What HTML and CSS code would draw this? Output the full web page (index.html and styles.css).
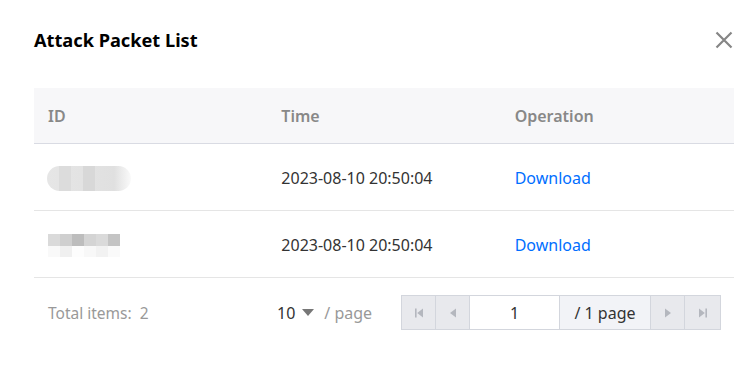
FILE: index.html
```html
<!DOCTYPE html>
<html lang="en">
<head>
    <meta charset="UTF-8">
    <meta name="viewport" content="width=device-width, initial-scale=1.0">
    <title>Attack Packet List</title>
    <link rel="stylesheet" href="styles.css">
</head>
<body>
    <div class="dialog">
        <div class="dialog-head">
            <h2 class="dialog-title">Attack Packet List</h2>
            <button class="close-btn" aria-label="Close">
                <svg width="18" height="18" viewBox="0 0 18 18">
                    <path d="M1.5 1.5 L16.5 16.5 M16.5 1.5 L1.5 16.5" stroke="#868686" stroke-width="2.2" fill="none"/>
                </svg>
            </button>
        </div>

        <table class="list">
            <thead>
                <tr>
                    <th>ID</th>
                    <th>Time</th>
                    <th>Operation</th>
                </tr>
            </thead>
            <tbody>
                <tr>
                    <td><span class="mask mask-pill"><i></i><i></i><i></i><i></i><i></i><i></i></span></td>
                    <td>2023-08-10 20:50:04</td>
                    <td><a class="link" href="#">Download</a></td>
                </tr>
                <tr>
                    <td><span class="mask mask-grid"><i></i><i></i><i></i><i></i><i></i><i></i><i></i><i></i><i></i><i></i><i></i><i></i></span></td>
                    <td>2023-08-10 20:50:04</td>
                    <td><a class="link" href="#">Download</a></td>
                </tr>
            </tbody>
        </table>

        <div class="pager">
            <div class="pager-total">Total items:&nbsp; 2</div>
            <div class="pager-size">
                <span class="size-val">10</span>
                <span class="caret"></span>
                <span class="size-unit">/ page</span>
            </div>
            <div class="pager-nav">
                <button class="nav-btn" aria-label="First">
                    <svg width="10" height="10" viewBox="0 0 10 10"><rect x="1" y="0.5" width="1.6" height="9" fill="#b4b7be"/><path d="M9 0.5 L3.2 5 L9 9.5 Z" fill="#b4b7be"/></svg>
                </button>
                <button class="nav-btn" aria-label="Previous">
                    <svg width="10" height="10" viewBox="0 0 10 10"><path d="M8 0.5 L2 5 L8 9.5 Z" fill="#b4b7be"/></svg>
                </button>
                <input class="page-input" type="text" value="1">
                <span class="page-count">/ 1 page</span>
                <button class="nav-btn" aria-label="Next">
                    <svg width="10" height="10" viewBox="0 0 10 10"><path d="M2 0.5 L8 5 L2 9.5 Z" fill="#b4b7be"/></svg>
                </button>
                <button class="nav-btn" aria-label="Last">
                    <svg width="10" height="10" viewBox="0 0 10 10"><path d="M1 0.5 L6.8 5 L1 9.5 Z" fill="#b4b7be"/><rect x="7.4" y="0.5" width="1.6" height="9" fill="#b4b7be"/></svg>
                </button>
            </div>
        </div>
    </div>
</body>
</html>
```

FILE: styles.css
```css
body {
    margin: 0;
    background: #fff;
    font-family: "Noto Sans", "Open Sans", Arial, sans-serif;
    font-size: 16px;
    color: #333;
}
.dialog {
    width: 754px;
    height: 382px;
    padding: 0 20px 0 34px;
    box-sizing: border-box;
    background: #fff;
}
.dialog-head {
    display: flex;
    align-items: center;
    justify-content: space-between;
    height: 88px;
    padding-bottom: 8px;
    box-sizing: border-box;
}
.dialog-title {
    margin: 0;
    font-size: 18.2px;
    font-weight: 700;
    color: #000;
}
.close-btn {
    border: none;
    background: none;
    padding: 0;
    margin-right: 1px;
    width: 18px;
    height: 18px;
    cursor: pointer;
    line-height: 0;
}
.list {
    width: 700px;
    border-collapse: collapse;
    table-layout: fixed;
}
.list th {
    height: 54px;
    padding: 1px 14px 0;
    background: #f7f7f9;
    border-bottom: 1px solid #d9dbe3;
    text-align: left;
    font-weight: 600;
    color: #888;
    font-size: 16px;
}
.list td {
    height: 64px;
    padding: 2px 14px 0;
    border-bottom: 1px solid #e5e5e5;
    vertical-align: middle;
    color: #333;
    font-size: 16px;
}
.link {
    color: #006eff;
    text-decoration: none;
}
.mask {
    display: grid;
    width: 84px;
}
.mask i {
    display: block;
}
.mask-pill {
    grid-template-columns: repeat(6, 12px) 12px;
    height: 25px;
    border-radius: 13px;
    overflow: hidden;
    background: linear-gradient(90deg, #e6e6e6 0, #e0e0e0 80%, #fafafa 100%);
    margin-left: -1px;
}
.mask-pill i:nth-child(2) { background: #dcdcdc; }
.mask-pill i:nth-child(4) { background: #d8d8d8; }
.mask-grid {
    grid-template-columns: repeat(6, 12px);
    grid-template-rows: 12px 11px;
    width: 72px;
}
.mask-grid i:nth-child(1) { background: #dadada; }
.mask-grid i:nth-child(2) { background: #cfcfcf; }
.mask-grid i:nth-child(3) { background: #bdbdbd; }
.mask-grid i:nth-child(4) { background: #d4d4d4; }
.mask-grid i:nth-child(5) { background: #dadada; }
.mask-grid i:nth-child(6) { background: #c4c4c4; }
.mask-grid i:nth-child(7) { background: #f9f9f9; }
.mask-grid i:nth-child(8) { background: #f0f0f0; }
.mask-grid i:nth-child(9) { background: #fdfdfd; }
.mask-grid i:nth-child(10) { background: #f8f8f8; }
.mask-grid i:nth-child(11) { background: #f2f2f2; }
.mask-grid i:nth-child(12) { background: #fafafa; }
.pager {
    display: flex;
    align-items: center;
    height: 68px;
    padding-left: 14px;
    padding-top: 1px;
    box-sizing: border-box;
}
.pager-total {
    width: 229px;
    color: #999;
    font-size: 15.5px;
}
.pager-size {
    display: flex;
    align-items: center;
    width: 124px;
}
.size-val {
    color: #333;
}
.caret {
    width: 0;
    height: 0;
    margin: 0 10px 0 7px;
    border-left: 6px solid transparent;
    border-right: 6px solid transparent;
    border-top: 7px solid #777;
}
.size-unit {
    color: #999;
}
.pager-nav {
    display: flex;
    height: 35px;
    border: 1px solid #d3d6dd;
    box-sizing: border-box;
}
.nav-btn {
    width: 34px;
    border: none;
    border-right: 1px solid #d3d6dd;
    background: #e8e9ed;
    padding: 0;
    display: flex;
    align-items: center;
    justify-content: center;
}
.nav-btn:last-child {
    border-right: none;
    width: 35px;
}
.page-input {
    width: 89px;
    border: none;
    border-right: 1px solid #d3d6dd;
    text-align: center;
    font-family: inherit;
    font-size: 16px;
    color: #333;
    padding: 0;
    outline: none;
}
.page-count {
    width: 90px;
    border-right: 1px solid #d3d6dd;
    background: #f2f3f7;
    display: flex;
    align-items: center;
    justify-content: center;
    color: #333;
}
```
